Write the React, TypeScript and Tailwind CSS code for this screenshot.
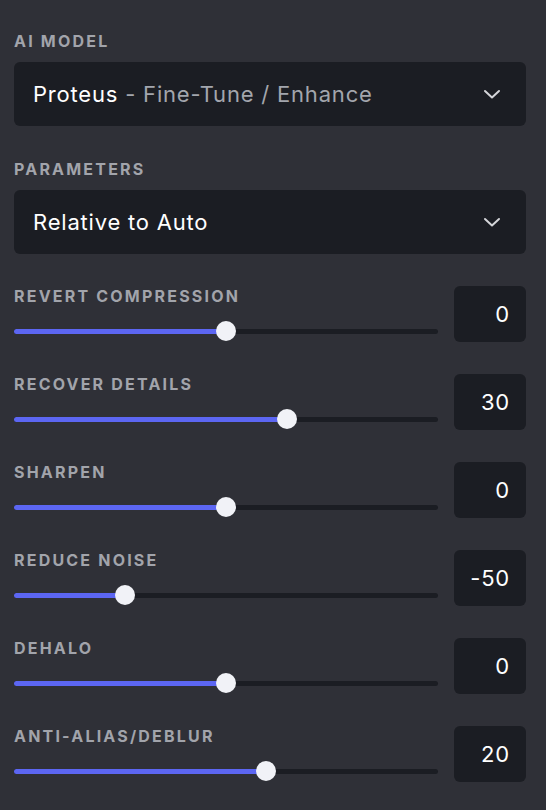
import React from "react";

type Param = { label: string; value: number };

const params: Param[] = [
  { label: "REVERT COMPRESSION", value: 0 },
  { label: "RECOVER DETAILS", value: 30 },
  { label: "SHARPEN", value: 0 },
  { label: "REDUCE NOISE", value: -50 },
  { label: "DEHALO", value: 0 },
  { label: "ANTI-ALIAS/DEBLUR", value: 20 },
];

function Chevron() {
  return (
    <svg width="18" height="10" viewBox="0 0 18 10" fill="none" className="text-[#d4d5d9]">
      <path d="M2 2l7 6.5L16 2" stroke="currentColor" strokeWidth="2" strokeLinecap="round" strokeLinejoin="round" />
    </svg>
  );
}

function SectionLabel({ children }: { children: React.ReactNode }) {
  return (
    <div className="h-5 text-[16px] leading-5 font-bold tracking-[2.2px] text-[#a2a4ab]">{children}</div>
  );
}

function Select({ children }: { children: React.ReactNode }) {
  return (
    <div className="flex h-16 items-center justify-between rounded-md bg-[#1b1d23] pl-[19px] pr-[25px]">
      <div className="text-[22px] leading-7 tracking-[0.8px]">{children}</div>
      <Chevron />
    </div>
  );
}

function Slider({ value }: { value: number }) {
  // thumb centre travels over track width minus thumb width
  const pct = (value + 100) / 200;
  const left = `calc(10px + (100% - 20px) * ${pct})`;
  return (
    <div className="relative h-5">
      <div className="absolute inset-x-0 top-[7.5px] h-[5px] rounded-full bg-[#1b1d23]" />
      <div className="absolute left-0 top-[7.5px] h-[5px] rounded-full bg-[#5c66f2]" style={{ width: left }} />
      <div
        className="absolute top-0 h-5 w-5 -translate-x-1/2 rounded-full bg-[#f1f2f7]"
        style={{ left }}
      />
    </div>
  );
}

function ParamRow({ label, value }: Param) {
  return (
    <div className="flex items-start gap-4">
      <div className="flex flex-1 flex-col gap-[15px]">
        <SectionLabel>{label}</SectionLabel>
        <Slider value={value} />
      </div>
      <div className="flex h-14 w-[72px] items-center justify-end rounded-md bg-[#1b1d23] pr-4 text-[22px] tracking-[0.8px] text-white">
        {value}
      </div>
    </div>
  );
}

export default function App() {
  return (
    <div
      className="min-h-[810px] w-[546px] bg-[#2f3037] pl-[14px] pr-5 pt-[31px] text-white"
      style={{ fontFamily: "Inter, 'Noto Sans', sans-serif" }}
    >
      <SectionLabel>AI MODEL</SectionLabel>
      <div className="mt-[11px]">
        <Select>
          <span className="text-white">Proteus</span>
          <span className="text-[#a3a6ad]"> - Fine-Tune / Enhance</span>
        </Select>
      </div>
      <div className="mt-[33px]">
        <SectionLabel>PARAMETERS</SectionLabel>
      </div>
      <div className="mt-[11px]">
        <Select>
          <span className="text-white">Relative to Auto</span>
        </Select>
      </div>
      <div className="mt-8 flex flex-col gap-8">
        {params.map((p) => (
          <ParamRow key={p.label} {...p} />
        ))}
      </div>
    </div>
  );
}
